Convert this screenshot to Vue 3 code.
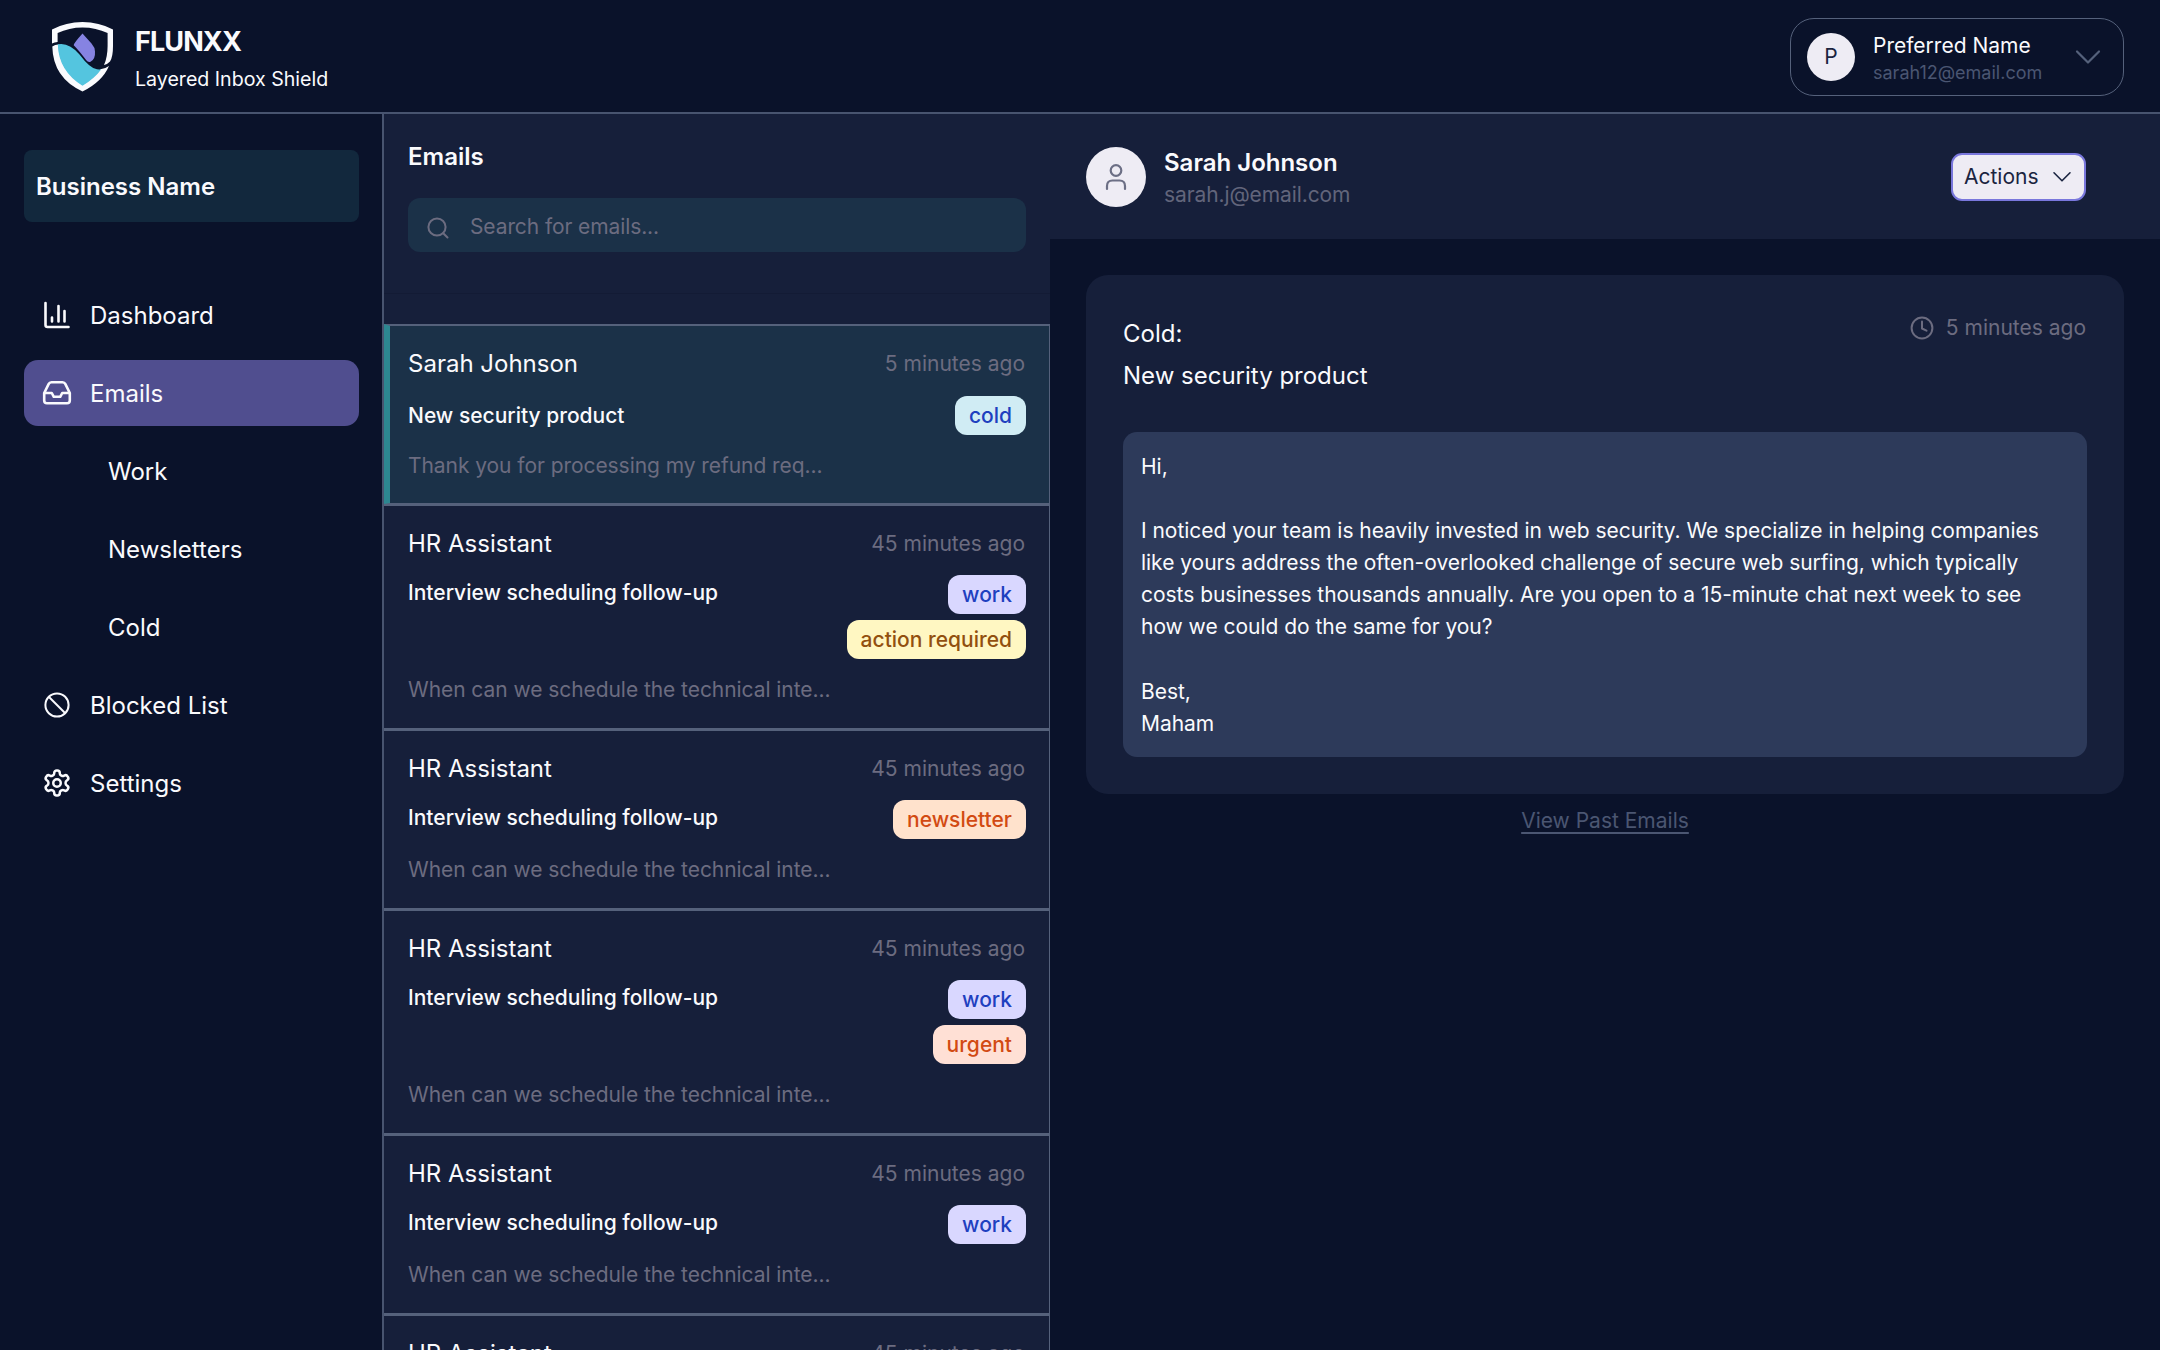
<template>
  <div class="app">
    <header class="topbar">
      <div class="brand">
        <svg class="brand-logo" viewBox="52 22 61 70">
          <path
            fill="#fafafd"
            d="M52 43.5V29.5Q66 22 82.5 22Q99 22 113 29.5V46Q113 57 110 61.5Q107.5 64.3 104 65Q107.6 57 107.6 46V33Q96 27.4 82.5 27.4Q69 27.4 57.6 33V42Q54.5 42 52 43.5Z"
          />
          <path
            fill="#fafafd"
            d="M52.3 46.6Q55 44.8 58.5 44.6Q59 70 82.5 85Q95 77 100.5 69.3Q105 68.8 109 66Q102 82 82.5 91.5Q53 78 52.3 46.6Z"
          />
          <path
            fill="#54c5df"
            d="M57.8 44.3Q69 42 79.5 54.5Q90 68.5 97 69.3Q100 69.5 101.3 69.2Q95 78 82.5 85.8Q58.5 71 57.8 44.3Z"
          />
          <path
            fill="#8683e2"
            d="M82.5 33.6L91.5 43.5Q95 47.5 95 51.5Q95.5 59.5 90.5 61.7Q88 62.5 86.3 60.3Q79 50.5 73.7 45.2Q74 43 82.5 33.6Z"
          />
        </svg>
        <div class="brand-text">
          <span class="brand-name">FLUNXX</span>
          <span class="brand-tagline">Layered Inbox Shield</span>
        </div>
      </div>

      <button class="profile">
        <span class="profile-avatar">P</span>
        <span class="profile-info">
          <span class="profile-name">Preferred Name</span>
          <span class="profile-email">sarah12@email.com</span>
        </span>
        <svg class="profile-chevron" viewBox="0 0 28 18">
          <path d="M3 3.5L14 14.5L25 3.5" />
        </svg>
      </button>
    </header>

    <div class="content">
      <aside class="sidebar">
        <div class="business">Business Name</div>
        <nav class="nav">
          <a
            v-for="item in navItems"
            :key="item.label"
            class="nav-item"
            :class="{ active: item.label === activeNav, sub: item.sub }"
            @click="activeNav = item.label"
          >
            <svg v-if="item.icon === 'chart'" class="nav-icon" viewBox="0 0 30 30">
              <path d="M3.5 3V25Q3.5 27 5.5 27H26.5M10 17.5V21.5M16.5 6V21.5M22.5 11V21.5" />
            </svg>
            <svg v-else-if="item.icon === 'inbox'" class="nav-icon" viewBox="0 0 30 30">
              <path
                d="M2.2 15L6.6 6.1Q7.5 4.3 9.5 4.3H20.5Q22.5 4.3 23.4 6.1L27.8 15V22.5Q27.8 25.3 25 25.3H5Q2.2 25.3 2.2 22.5ZM2.2 15H9.8L11.8 18.8H18.2L20.2 15H27.8"
              />
            </svg>
            <svg v-else-if="item.icon === 'block'" class="nav-icon thin" viewBox="0 0 30 30">
              <circle cx="15" cy="15" r="11.6" />
              <path d="M7 7L23 23" />
            </svg>
            <svg v-else-if="item.icon === 'gear'" class="nav-icon gear" viewBox="0 0 24 24">
              <path
                d="M12.22 2h-.44a2 2 0 0 0-2 2v.18a2 2 0 0 1-1 1.73l-.43.25a2 2 0 0 1-2 0l-.15-.08a2 2 0 0 0-2.73.73l-.22.38a2 2 0 0 0 .73 2.73l.15.1a2 2 0 0 1 1 1.72v.51a2 2 0 0 1-1 1.74l-.15.09a2 2 0 0 0-.73 2.73l.22.38a2 2 0 0 0 2.73.73l.15-.08a2 2 0 0 1 2 0l.43.25a2 2 0 0 1 1 1.73V20a2 2 0 0 0 2 2h.44a2 2 0 0 0 2-2v-.18a2 2 0 0 1 1-1.73l.43-.25a2 2 0 0 1 2 0l.15.08a2 2 0 0 0 2.73-.73l.22-.39a2 2 0 0 0-.73-2.73l-.15-.08a2 2 0 0 1-1-1.74v-.5a2 2 0 0 1 1-1.74l.15-.09a2 2 0 0 0 .73-2.73l-.22-.38a2 2 0 0 0-2.73-.73l-.15.08a2 2 0 0 1-2 0l-.43-.25a2 2 0 0 1-1-1.73V4a2 2 0 0 0-2-2z"
              />
              <circle cx="12" cy="12" r="3" />
            </svg>
            <span>{{ item.label }}</span>
          </a>
        </nav>
      </aside>

      <section class="inbox">
        <div class="inbox-header">
          <h2>Emails</h2>
          <label class="search">
            <svg class="search-icon" viewBox="0 0 24 24">
              <circle cx="11" cy="11" r="8.6" />
              <path d="M17.2 17.2L21.5 21.5" />
            </svg>
            <input v-model="query" type="text" placeholder="Search for emails..." />
          </label>
        </div>
        <div class="inbox-gap"></div>
        <ul class="mail-list">
          <li
            v-for="mail in mails"
            :key="mail.id"
            class="mail"
            :class="{ selected: mail.id === selectedId }"
            @click="selectedId = mail.id"
          >
            <div class="mail-top">
              <span class="mail-from">{{ mail.from }}</span>
              <span class="mail-time">{{ mail.time }}</span>
            </div>
            <div class="mail-middle">
              <span class="mail-subject">{{ mail.subject }}</span>
              <div class="tags">
                <span v-for="tag in mail.tags" :key="tag" class="tag" :class="tagClass(tag)">{{
                  tag
                }}</span>
              </div>
            </div>
            <div class="mail-preview">{{ mail.preview }}</div>
          </li>
        </ul>
      </section>

      <main class="detail">
        <div class="detail-header">
          <div class="sender-avatar">
            <svg viewBox="0 0 24 28">
              <circle cx="12" cy="7.5" r="5.3" />
              <path d="M3 26V23Q3 17.5 8.5 17.5H15.5Q21 17.5 21 23V26" />
            </svg>
          </div>
          <div class="sender-info">
            <span class="sender-name">Sarah Johnson</span>
            <span class="sender-email">sarah.j@email.com</span>
          </div>
          <button class="actions">
            Actions
            <svg viewBox="0 0 20 12">
              <path d="M2 1.8L10 9.8L18 1.8" />
            </svg>
          </button>
        </div>

        <article class="card">
          <div class="card-top">
            <div class="card-title">
              <span>Cold:</span>
              <span>New security product</span>
            </div>
            <div class="card-time">
              <svg viewBox="0 0 24 24">
                <circle cx="12" cy="12" r="10.4" />
                <path d="M12 5.5V12.5L16.5 14.7" />
              </svg>
              5 minutes ago
            </div>
          </div>
          <div class="card-body">{{ body }}</div>
        </article>
        <a class="past-link">View Past Emails</a>
      </main>
    </div>
  </div>
</template>

<script setup>
import { ref } from 'vue'

const activeNav = ref('Emails')
const selectedId = ref(1)
const query = ref('')

const navItems = [
  { label: 'Dashboard', icon: 'chart' },
  { label: 'Emails', icon: 'inbox' },
  { label: 'Work', sub: true },
  { label: 'Newsletters', sub: true },
  { label: 'Cold', sub: true },
  { label: 'Blocked List', icon: 'block' },
  { label: 'Settings', icon: 'gear' },
]

const followUp = {
  from: 'HR Assistant',
  time: '45 minutes ago',
  subject: 'Interview scheduling follow-up',
  preview: 'When can we schedule the technical inte...',
}

const mails = [
  {
    id: 1,
    from: 'Sarah Johnson',
    time: '5 minutes ago',
    subject: 'New security product',
    preview: 'Thank you for processing my refund req...',
    tags: ['cold'],
  },
  { id: 2, ...followUp, tags: ['work', 'action required'] },
  { id: 3, ...followUp, tags: ['newsletter'] },
  { id: 4, ...followUp, tags: ['work', 'urgent'] },
  { id: 5, ...followUp, tags: ['work'] },
  { id: 6, ...followUp, tags: ['work'] },
]

const body = `Hi,

I noticed your team is heavily invested in web security. We specialize in helping companies
like yours address the often-overlooked challenge of secure web surfing, which typically
costs businesses thousands annually. Are you open to a 15-minute chat next week to see
how we could do the same for you?

Best,
Maham`

const tagClass = (tag) => 'tag-' + tag.replace(' ', '-')
</script>

<style>
body {
  background: #0a122a;
}
</style>

<style scoped>
* {
  box-sizing: border-box;
}

.app {
  height: 1350px;
  overflow: hidden;
  display: flex;
  flex-direction: column;
  background: #0a122a;
  color: #fafafd;
  font-family: Inter, 'Liberation Sans', sans-serif;
  font-size: 21px;
}

button {
  font: inherit;
  cursor: pointer;
}

svg {
  fill: none;
  stroke-linecap: round;
  stroke-linejoin: round;
  flex-shrink: 0;
}

/* top bar */
.topbar {
  height: 114px;
  flex-shrink: 0;
  display: flex;
  justify-content: space-between;
  align-items: center;
  padding: 0 36px 0 52px;
  border-bottom: 2px solid #48546f;
}

.brand {
  display: flex;
  align-items: center;
  gap: 22px;
}

.brand-logo {
  width: 61px;
  height: 70px;
  margin-top: 2px;
}

.brand-text {
  display: flex;
  flex-direction: column;
  padding-top: 5px;
}

.brand-name {
  font-size: 27px;
  font-weight: 700;
  line-height: 40px;
  letter-spacing: -0.9px;
}

.brand-tagline {
  font-size: 19.6px;
  line-height: 34px;
}

.profile {
  width: 334px;
  height: 78px;
  margin-top: 2px;
  display: flex;
  align-items: center;
  padding: 0 21px 0 16px;
  border: 1px solid #55617b;
  border-radius: 24px;
  background: none;
  color: #fafafd;
}

.profile-avatar {
  width: 48px;
  height: 48px;
  border-radius: 50%;
  background: #eeecf4;
  color: #1a2440;
  line-height: 48px;
  text-align: center;
}

.profile-info {
  display: flex;
  flex-direction: column;
  margin-left: 18px;
  padding-top: 3px;
  text-align: left;
}

.profile-name {
  line-height: 28px;
}

.profile-email {
  font-size: 18px;
  line-height: 25px;
  color: #4b5672;
}

.profile-chevron {
  width: 28px;
  height: 18px;
  margin-left: auto;
  stroke: #55617b;
  stroke-width: 2.2;
}

/* sidebar */
.content {
  flex: 1;
  min-height: 0;
  display: flex;
}

.sidebar {
  width: 384px;
  flex-shrink: 0;
  padding: 36px 23px 0 24px;
  border-right: 2px solid #48546f;
}

.business {
  height: 72px;
  padding-left: 12px;
  border-radius: 8px;
  background: #12283d;
  font-size: 24px;
  font-weight: 600;
  line-height: 74px;
}

.nav {
  display: flex;
  flex-direction: column;
  gap: 12px;
  margin-top: 60px;
}

.nav-item {
  height: 66px;
  display: flex;
  align-items: center;
  gap: 18px;
  padding-left: 18px;
  border-radius: 14px;
  font-size: 24px;
  cursor: pointer;
}

.nav-item.active {
  background: #504e8f;
}

.nav-item.sub {
  padding-left: 84px;
}

.nav-icon {
  width: 30px;
  height: 30px;
  stroke: #fafafd;
  stroke-width: 2.6;
}

.nav-icon.thin {
  stroke-width: 2;
}

.nav-icon.gear {
  stroke-width: 2;
}

/* email list */
.inbox {
  width: 666px;
  flex-shrink: 0;
  background: #161f3a;
}

.inbox-header {
  height: 180px;
  padding: 24px 24px 0;
  border-bottom: 1px solid #131b35;
}

.inbox-header h2 {
  margin: 0;
  font-size: 24px;
  font-weight: 600;
  line-height: 38px;
}

.search {
  height: 54px;
  margin-top: 22px;
  display: flex;
  align-items: center;
  padding-left: 18px;
  border-radius: 12px;
  background: #1b3148;
}

.search-icon {
  width: 24px;
  height: 24px;
  margin-top: 5px;
  stroke: #6c6c80;
  stroke-width: 2;
}

.search input {
  flex: 1;
  margin-left: 20px;
  padding: 2px 0 0;
  border: none;
  outline: none;
  background: none;
  color: #fafafd;
  font: inherit;
  letter-spacing: -0.1px;
}

.search input::placeholder {
  color: #6c6c80;
  opacity: 1;
}

.inbox-gap {
  height: 30px;
}

.mail-list {
  margin: 0;
  padding: 0;
  list-style: none;
}

.mail {
  padding: 19px 23px 22px 24px;
  border-top: 2px solid #55617b;
  border-bottom: 1px solid #55617b;
  border-right: 1px solid #55617b;
  cursor: pointer;
}

.mail.selected {
  padding-bottom: 21px;
  padding-left: 18px;
  border-left: 6px solid #2d8791;
  background: #1b3148;
}

.mail-top {
  height: 36px;
  display: flex;
  justify-content: space-between;
  align-items: center;
}

.mail-from {
  font-size: 24px;
}

.mail-time,
.mail-preview {
  color: #6c6c80;
}

.mail-time {
  padding-right: 1px;
}

.mail-middle {
  display: flex;
  justify-content: space-between;
  margin-top: 14px;
}

.mail.selected .mail-middle {
  margin-top: 15px;
}

.mail-subject {
  font-weight: 500;
  line-height: 35px;
}

.mail.selected .mail-subject {
  line-height: 39px;
}

.tags {
  display: flex;
  flex-direction: column;
  align-items: flex-end;
  gap: 6px;
}

.tag {
  height: 39px;
  padding: 0 14px;
  border-radius: 12px;
  font-weight: 500;
  line-height: 39px;
}

.tag-cold {
  background: #d0ecf4;
  color: #1e40bf;
}

.tag-work {
  background: #d9d7ff;
  color: #1e40bf;
}

.tag-action-required {
  background: #fff7c2;
  color: #92500f;
}

.tag-newsletter {
  background: #ffe2cc;
  color: #d24a12;
}

.tag-urgent {
  background: #ffe0d5;
  color: #d24a12;
}

.mail-preview {
  margin-top: 15px;
  line-height: 32px;
  letter-spacing: -0.06px;
}

/* opened email */
.detail {
  flex: 1;
  display: flex;
  flex-direction: column;
}

.detail-header {
  height: 125px;
  display: flex;
  align-items: center;
  padding: 0 74px 0 36px;
  background: #161f3a;
}

.sender-avatar {
  width: 60px;
  height: 60px;
  display: flex;
  justify-content: center;
  align-items: center;
  border-radius: 50%;
  background: #eeecf4;
}

.sender-avatar svg {
  width: 24px;
  height: 28px;
  stroke: #6c6f85;
  stroke-width: 2.2;
}

.sender-info {
  display: flex;
  flex-direction: column;
  margin-left: 18px;
  padding-top: 3px;
}

.sender-name {
  font-size: 24px;
  font-weight: 600;
  line-height: 33px;
}

.sender-email {
  line-height: 31px;
  letter-spacing: -0.1px;
  color: #62657b;
}

.actions {
  width: 135px;
  height: 48px;
  margin-left: auto;
  display: flex;
  justify-content: space-between;
  align-items: center;
  padding: 0 12px 0 11px;
  border: 2px solid #7977dc;
  border-radius: 11px;
  background: #eeecf4;
  color: #1a2440;
}

.actions svg {
  width: 20px;
  height: 12px;
  stroke: #1a2440;
  stroke-width: 1.6;
}

.card {
  margin: 36px 36px 0;
  height: 519px;
  padding: 37px;
  border-radius: 22px;
  background: #161f3a;
}

.card-top {
  height: 120px;
  display: flex;
  justify-content: space-between;
  align-items: flex-start;
}

.card-title {
  display: flex;
  flex-direction: column;
  padding-top: 1px;
  font-size: 24px;
  line-height: 42px;
}

.card-time {
  display: flex;
  align-items: center;
  gap: 12px;
  padding: 1px 1px 0 0;
  line-height: 30px;
  color: #6c6c80;
}

.card-time svg {
  width: 24px;
  height: 24px;
  stroke: #6c6c80;
  stroke-width: 2;
}

.card-body {
  height: 325px;
  padding: 19px 18px 0;
  border-radius: 14px;
  background: #2d3a5a;
  line-height: 32.1px;
  letter-spacing: -0.03px;
  white-space: pre;
}

.past-link {
  align-self: center;
  margin-top: 12px;
  color: #4b5672;
  line-height: 30px;
  text-decoration: underline;
  text-underline-offset: 4px;
  text-decoration-thickness: 1.5px;
  cursor: pointer;
}
</style>
